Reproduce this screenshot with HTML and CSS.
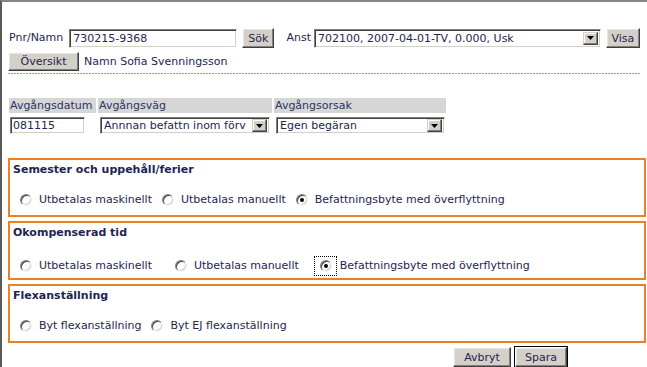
FILE: index.html
```html
<!DOCTYPE html>
<html lang="sv">
<head>
<meta charset="utf-8">
<title>Avgång</title>
<link rel="stylesheet" href="styles.css">
</head>
<body>
<div class="page">
  <div class="search">
    <div class="row1">
      <span class="lbl">Pnr/Namn</span>
      <span class="input pnr">730215-9368</span>
      <span class="btn sok">Sök</span>
      <span class="lbl anst">Anst</span>
      <span class="select anstsel"><span class="val">702100, 2007-04-01-TV, 0.000, Usk</span><span class="arrow"><svg width="7" height="4" viewBox="0 0 7 4"><path d="M0 0h7L3.5 4z" fill="#000"/></svg></span></span>
      <span class="btn visa">Visa</span>
    </div>
    <div class="row2">
      <span class="btn oversikt">Översikt</span>
      <span class="name">Namn Sofia Svenningsson</span>
    </div>
  </div>

  <div class="grid">
    <div class="head">Avgångsdatum</div>
    <div class="head">Avgångsväg</div>
    <div class="head">Avgångsorsak</div>
    <div class="cell"><span class="input datum">081115</span></div>
    <div class="cell"><span class="select vag"><span class="val">Annnan befattn inom förv</span><span class="arrow"><svg width="7" height="4" viewBox="0 0 7 4"><path d="M0 0h7L3.5 4z" fill="#000"/></svg></span></span></div>
    <div class="cell"><span class="select orsak"><span class="val">Egen begäran</span><span class="arrow"><svg width="7" height="4" viewBox="0 0 7 4"><path d="M0 0h7L3.5 4z" fill="#000"/></svg></span></span></div>
  </div>

  <div class="box">
    <div class="title">Semester och uppehåll/ferier</div>
    <div class="radios">
      <span class="opt"><span class="radio"></span>Utbetalas maskinellt</span>
      <span class="opt"><span class="radio"></span>Utbetalas manuellt</span>
      <span class="opt"><span class="radio checked"></span>Befattningsbyte med överflyttning</span>
    </div>
  </div>

  <div class="box">
    <div class="title">Okompenserad tid</div>
    <div class="radios wide">
      <span class="opt"><span class="radio"></span>Utbetalas maskinellt</span>
      <span class="opt"><span class="radio"></span>Utbetalas manuellt</span>
      <span class="opt"><span class="focus"><span class="radio checked"></span></span>Befattningsbyte med överflyttning</span>
    </div>
  </div>

  <div class="box">
    <div class="title">Flexanställning</div>
    <div class="radios">
      <span class="opt"><span class="radio"></span>Byt flexanställning</span>
      <span class="opt"><span class="radio"></span>Byt EJ flexanställning</span>
    </div>
  </div>

  <div class="actions">
    <span class="btn avbryt">Avbryt</span>
    <span class="btn spara">Spara</span>
  </div>
</div>
</body>
</html>
```

FILE: styles.css
```css
html, body {
  margin: 0;
  padding: 0;
  background: #fff;
}
body {
  font-family: "DejaVu Sans", Verdana, sans-serif;
  font-size: 11px;
  color: #1e2552;
}
.page {
  box-sizing: border-box;
  height: 367px;
  overflow: hidden;
  border-top: 2px solid #858585;
  border-left: 2px solid #5a5a5a;
  padding: 26px 1px 0 6px;
}
.search {
  width: 632px;
}
.row1 {
  display: flex;
  align-items: center;
  height: 20px;
}
.lbl {
  margin-left: 1px;
  line-height: 14px;
}
.input {
  box-sizing: border-box;
  display: inline-flex;
  align-items: center;
  background: #fff;
  border: 1px solid;
  border-color: #808080 #fff #fff #808080;
  box-shadow: inset 1px 1px #404040, inset -1px -1px #d4d0c8;
  padding: 0 3px;
  white-space: nowrap;
}
.pnr {
  width: 172px;
  height: 19px;
  margin-left: 6px;
}
.btn {
  box-sizing: border-box;
  display: inline-flex;
  align-items: center;
  justify-content: center;
  background: #d4d0c8;
  border: 1px solid;
  border-color: #fff #404040 #404040 #fff;
  box-shadow: inset -1px -1px #808080, inset 1px 1px #e8e6e0;
  color: #1e2552;
  height: 20px;
  white-space: nowrap;
}
.sok {
  width: 33px;
  margin-left: 5px;
}
.anst {
  margin-left: 12px;
}
.select {
  box-sizing: border-box;
  display: inline-flex;
  align-items: center;
  background: #fff;
  border: 1px solid;
  border-color: #808080 #fff #fff #808080;
  box-shadow: inset 1px 1px #404040, inset -1px -1px #d4d0c8;
  padding: 2px 2px 2px 3px;
  white-space: nowrap;
  overflow: hidden;
}
.select .val {
  flex: 1;
  overflow: hidden;
}
.arrow {
  box-sizing: border-box;
  flex: none;
  display: flex;
  align-items: center;
  justify-content: center;
  width: 15px;
  height: 100%;
  background: #d4d0c8;
  border: 1px solid;
  border-color: #d4d0c8 #404040 #404040 #d4d0c8;
  box-shadow: inset -1px -1px #808080, inset 1px 1px #fff;
}
.anstsel {
  width: 294px;
  height: 19px;
  margin-left: 3px;
}
.visa {
  width: 35px;
  margin-left: 5px;
}
.row2 {
  display: flex;
  align-items: center;
  margin-top: 4px;
  padding-bottom: 3px;
  background: repeating-linear-gradient(90deg, #ee8a1c 0 2px, transparent 2px 3px) left bottom / 100% 1px no-repeat;
}
.oversikt {
  width: 71px;
  height: 19px;
  margin-left: 0;
}
.name {
  margin-left: 5px;
}
.grid {
  display: grid;
  grid-template-columns: 87px 174px 172px;
  column-gap: 2px;
  row-gap: 4px;
  margin: 24px 0 0 1px;
}
.head {
  background: #d6d6d6;
  height: 15px;
  line-height: 16px;
  padding-left: 1px;
  color: #2a3366;
}
.cell {
  height: 17px;
  padding-left: 2px;
}
.datum {
  width: 75px;
  height: 17px;
  margin-left: -1px;
  padding-left: 2px;
}
.vag {
  width: 170px;
  height: 17px;
  padding-top: 1px;
  padding-bottom: 1px;
}
.orsak {
  width: 169px;
  height: 17px;
  padding-top: 1px;
  padding-bottom: 1px;
}
.box {
  box-sizing: border-box;
  width: 638px;
  height: 59px;
  margin-left: 0;
  border: 2px solid #ea8123;
  padding: 3px 0 0 3px;
}
.box + .box {
  margin-top: 4px;
}
.grid + .box {
  margin-top: 24px;
}
.title {
  font-weight: bold;
  line-height: 14px;
  color: #1e2552;
}
.radios {
  display: flex;
  align-items: center;
  margin-top: 16px;
  padding-left: 7px;
  line-height: 14px;
}
.opt {
  display: inline-flex;
  align-items: center;
  margin-right: 10px;
}
.radios.wide .opt {
  margin-right: 23px;
}
.radios.wide .opt:nth-child(2) {
  margin-right: 15px;
}
.radio {
  box-sizing: border-box;
  position: relative;
  display: inline-block;
  width: 12px;
  height: 12px;
  border-radius: 50%;
  background: #fff;
  border: 1px solid;
  border-color: #808080 #f4f4f4 #f4f4f4 #808080;
  box-shadow: inset 1px 1px #404040, inset -1px -1px #d4d0c8;
  margin-right: 7px;
}
.radio.checked::after {
  content: "";
  position: absolute;
  left: 3px;
  top: 3px;
  width: 4px;
  height: 4px;
  border-radius: 50%;
  background: #000;
}
.focus {
  display: inline-flex;
  align-items: center;
  border: 1px dotted #000;
  padding: 3px 0 3px 5px;
  margin-right: 3px;
}
.focus .radio {
  margin-right: 4px;
}
.actions {
  display: flex;
  gap: 4px;
  margin: 4px 0 0 445px;
}
.avbryt {
  width: 58px;
}
.spara {
  width: 52px;
  outline: 1px solid #000;
  outline-offset: 0;
}
```
